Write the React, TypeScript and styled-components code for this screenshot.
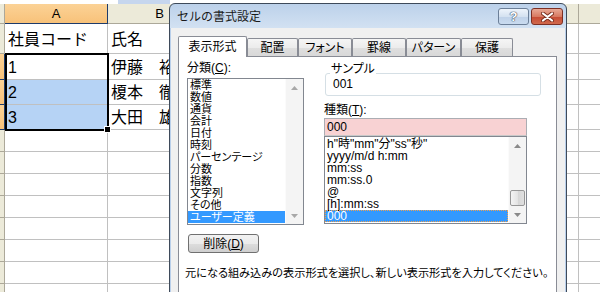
import styled, {createGlobalStyle, css} from 'styled-components';

const columns = ['A', 'B', 'C', 'D', 'E'];

const rows: string[][] = [
  ['社員コード', '氏名'],
  ['1', '伊藤　裕'],
  ['2', '榎本　徹'],
  ['3', '大田　雄'],
  [], [], [], [], [], [], [], [],
];

const categories = [
  '標準', '数値', '通貨', '会計', '日付', '時刻', 'パーセンテージ',
  '分数', '指数', '文字列', 'その他', 'ユーザー定義',
];

const formats = [
  'h"時"mm"分"ss"秒"',
  'yyyy/m/d h:mm',
  'mm:ss',
  'mm:ss.0',
  '@',
  '[h]:mm:ss',
  '000',
];

const tabs = [
  {label: '表示形式', width: 69},
  {label: '配置', width: 51},
  {label: 'フォント', width: 54},
  {label: '罫線', width: 54},
  {label: 'パターン', width: 55},
  {label: '保護', width: 52},
];

function ScrollArrow({down, color}: {down?: boolean; color: string}) {
  return (
    <svg width="7" height="4" viewBox="0 0 7 4">
      <path d={down ? 'M0 0h7L3.5 4z' : 'M0 4h7L3.5 0z'} fill={color}/>
    </svg>
  );
}

function CloseGlyph() {
  return (
    <svg width="13" height="10" viewBox="0 0 13 10">
      <path d="M2 1.5l9 7M11 1.5l-9 7" stroke="#7a3020" strokeWidth="4" strokeLinecap="round"/>
      <path d="M2 1.5l9 7M11 1.5l-9 7" stroke="#fff" strokeWidth="2.2" strokeLinecap="round"/>
    </svg>
  );
}

export default function App() {
  return (
    <Page>
      <GlobalStyle/>
      <TopStrip>
        <StripBlank/>
        <StripBlue/>
      </TopStrip>

      <Sheet>
        <HeaderCell $row={1} $col={1}/>
        {columns.map((c, j) => (
          <HeaderCell key={c} $row={1} $col={j + 2} $active={c === 'A'}>{c}</HeaderCell>
        ))}
        {rows.map((r, i) => [
          <HeaderCell key={`h${i}`} $row={i + 2} $col={1} $active={i >= 1 && i <= 3}/>,
          ...columns.map((c, j) => (
            <Cell key={`${c}${i}`} $row={i + 2} $col={j + 2} $selected={j === 0 && (i === 2 || i === 3)}>
              {r[j] ?? ''}
            </Cell>
          )),
        ])}
        <Selection/>
      </Sheet>

      <Dialog>
        <TitleBar>
          <Title>セルの書式設定</Title>
          <CaptionButtons>
            <HelpButton>?</HelpButton>
            <CloseButton><CloseGlyph/></CloseButton>
          </CaptionButtons>
        </TitleBar>

        <Client>
          <TabStrip>
            {tabs.map((t, i) => (
              <Tab key={t.label} $w={t.width} $active={i === 0}>{t.label}</Tab>
            ))}
          </TabStrip>

          <Panel>
            <Columns>
              <Column>
                <FieldLabel>分類(<u>C</u>):</FieldLabel>
                <ListBox $h={147}>
                  <ListItems>
                    {categories.map((c, i) => (
                      <ListItem key={c} $selected={i === categories.length - 1}>{c}</ListItem>
                    ))}
                  </ListItems>
                  <ScrollBar>
                    <ArrowButton><ScrollArrow color="#a8a8a8"/></ArrowButton>
                    <Track/>
                    <ArrowButton><ScrollArrow down color="#a8a8a8"/></ArrowButton>
                  </ScrollBar>
                </ListBox>
                <PushButton>削除(<u>D</u>)</PushButton>
              </Column>

              <Column>
                <GroupBox>
                  <GroupLegend>サンプル</GroupLegend>
                  <SampleValue>001</SampleValue>
                </GroupBox>
                <FieldLabel $gap={8}>種類(<u>T</u>):</FieldLabel>
                <TextInput>000</TextInput>
                <ListBox $h={88} $joined>
                  <ListItems $pad={1}>
                    {formats.map((f, i) => (
                      <ListItem key={f} $latin $selected={i === formats.length - 1} $focus={i === formats.length - 1}>{f}</ListItem>
                    ))}
                  </ListItems>
                  <ScrollBar>
                    <ArrowButton><ScrollArrow color="#8a8a8a"/></ArrowButton>
                    <Track>
                      <Thumb/>
                    </Track>
                    <ArrowButton><ScrollArrow down color="#8a8a8a"/></ArrowButton>
                  </ScrollBar>
                </ListBox>
              </Column>
            </Columns>

            <Hint>元になる組み込みの表示形式を選択し、新しい表示形式を入力してください。</Hint>
          </Panel>
        </Client>
      </Dialog>
    </Page>
  );
}

const GlobalStyle = createGlobalStyle`
  html, body {
    margin: 0;
    padding: 0;
    background: #fff;
    overflow: hidden;
  }

  body {
    font-family: "Liberation Sans", "Noto Sans CJK JP", sans-serif;
  }
`;

const Page = styled.div`
  position: relative;
  width: 600px;
  height: 292px;
  overflow: hidden;
`;

const TopStrip = styled.div`
  display: flex;
  height: 4px;
`;

const StripBlank = styled.div`
  width: 118px;
  background: #fff;
`;

const StripBlue = styled.div`
  width: 52px;
  background: #c6d6ee;
`;

const Sheet = styled.div`
  display: grid;
  grid-template-columns: 5px 103px 104px 183px 184px 120px;
  grid-template-rows: 20px 30px 26px 25px 25px repeat(8, 22px);
`;

const GridPlaced = css<{$row: number; $col: number}>`
  grid-row: ${({$row}) => $row};
  grid-column: ${({$col}) => $col};
`;

const HeaderCell = styled.div<{$row: number; $col: number; $active?: boolean}>`
  ${GridPlaced};
  box-sizing: border-box;
  display: flex;
  align-items: center;
  justify-content: center;
  overflow: hidden;
  background: #ecead9;
  border-right: 1px solid #aca899;
  border-bottom: 1px solid #aca899;
  font-family: "Liberation Sans", sans-serif;
  font-size: 13px;
  color: #000;

  ${({$active}) => $active && css`
    background: linear-gradient(#fbd296, #f8c27a);
    border-right-color: #1d3b6b;
    border-bottom-color: #1d3b6b;
  `}
`;

const Cell = styled.div<{$row: number; $col: number; $selected?: boolean}>`
  ${GridPlaced};
  box-sizing: border-box;
  display: flex;
  align-items: center;
  padding: 2px 0 0 3px;
  overflow: hidden;
  white-space: nowrap;
  background: ${({$selected}) => $selected ? '#b6d3f5' : '#fff'};
  border-right: 1px solid #c0c0c0;
  border-bottom: 1px solid #c0c0c0;
  font-family: "Liberation Sans", "Noto Sans CJK JP", sans-serif;
  font-size: 16px;
  line-height: 1;
  color: #000;
`;

const Selection = styled.div`
  grid-row: 3 / 6;
  grid-column: 2 / 3;
  position: relative;
  margin: -1px -1px -1px 0;
  border: 2px solid #000;
  pointer-events: none;

  &::after {
    content: '';
    position: absolute;
    right: -4px;
    bottom: -4px;
    width: 5px;
    height: 5px;
    background: #000;
    border: 1px solid #fff;
  }
`;

const Dialog = styled.div`
  position: absolute;
  top: 3px;
  left: 169px;
  width: 398px;
  height: 300px;
  box-sizing: border-box;
  display: flex;
  flex-direction: column;
  border: 1px solid #3e4a5a;
  border-radius: 6px 6px 0 0;
  background: linear-gradient(#bcd1ea, #d2e1f2 24px, #c4d8ef 24px);
  font-family: "Liberation Sans", "Noto Sans CJK JP", sans-serif;
  font-feature-settings: "palt";
  color: #000;
`;

const TitleBar = styled.div`
  display: flex;
  align-items: flex-start;
  height: 24px;
  box-sizing: border-box;
  padding: 4px 3px 0 7px;
`;

const Title = styled.span`
  font-family: "Noto Sans CJK JP", sans-serif;
  font-feature-settings: normal;
  font-size: 12px;
  line-height: 16px;
  color: #1a1a1a;
`;

const CaptionButtons = styled.div`
  display: flex;
  gap: 2px;
  margin-left: auto;
`;

const CaptionButton = styled.div`
  box-sizing: border-box;
  height: 17px;
  display: flex;
  align-items: center;
  justify-content: center;
  border-radius: 3px;
`;

const HelpButton = styled(CaptionButton)`
  width: 31px;
  border: 1px solid #6c7f98;
  background: linear-gradient(#eef4fb, #d5e2f1 50%, #bfd1e8 51%, #cadcf0);
  font-family: "Liberation Sans", sans-serif;
  font-weight: bold;
  font-size: 13px;
  color: #fff;
  text-shadow: 0 0 1px #3b4a5f, 0 0 1px #3b4a5f, 0 0 1px #3b4a5f;
`;

const CloseButton = styled(CaptionButton)`
  width: 32px;
  border: 1px solid #7d2f23;
  background: linear-gradient(#e8a996, #d87a62 50%, #c64a33 51%, #d0694d);
`;

const Client = styled.div`
  flex: 1;
  display: flex;
  flex-direction: column;
  padding: 8px 8px 0 7px;
  background: #f0f0f0;
  border-left: 1px solid #b9cfea;
  border-right: 1px solid #b9cfea;
`;

const TabStrip = styled.div`
  display: flex;
  align-items: flex-end;
  height: 20px;
  position: relative;
  z-index: 1;
`;

const Tab = styled.div<{$w: number; $active?: boolean}>`
  box-sizing: border-box;
  width: ${({$w}) => $w}px;
  height: 18px;
  display: flex;
  justify-content: center;
  padding-top: 2px;
  border: 1px solid #898c95;
  border-bottom: none;
  border-radius: 2px 2px 0 0;
  background: linear-gradient(#f5f5f5, #ececec 50%, #dfdfdf 51%, #d8d8d8);
  font-size: 12px;
  line-height: 14px;

  ${({$active}) => $active && css`
    height: 21px;
    margin-bottom: -1px;
    padding-top: 3px;
    background: #fff;
  `}
`;

const Panel = styled.div`
  flex: 1;
  display: flex;
  flex-direction: column;
  padding: 5px 0 0 8px;
  background: #fff;
  border: 1px solid #898c95;
`;

const Columns = styled.div`
  display: grid;
  grid-template-columns: 117px 217px;
  column-gap: 20px;
  align-items: start;
`;

const Column = styled.div`
  display: flex;
  flex-direction: column;
  align-items: flex-start;
`;

const FieldLabel = styled.div<{$gap?: number}>`
  margin-top: ${({$gap}) => $gap ?? 0}px;
  font-size: 12px;
  line-height: 12px;
  height: 12px;
  white-space: nowrap;

  u {
    text-underline-offset: 1px;
  }
`;

const ListBox = styled.div<{$h: number; $joined?: boolean}>`
  box-sizing: border-box;
  width: ${({$joined}) => $joined ? 203 : 117}px;
  height: ${({$h}) => $h}px;
  margin-top: ${({$joined}) => $joined ? 0 : 4}px;
  display: flex;
  border: 1px solid #828790;
  background: #fff;
  overflow: hidden;
`;

const ListItems = styled.div<{$pad?: number}>`
  flex: 1;
  min-width: 0;
  padding-top: ${({$pad}) => $pad ?? 0}px;
  overflow: hidden;
`;

const ListItem = styled.div<{$selected?: boolean; $focus?: boolean; $latin?: boolean}>`
  box-sizing: border-box;
  height: 12px;
  padding-left: 2px;
  font-size: ${({$latin}) => $latin ? 12 : 11}px;
  line-height: 12px;
  white-space: nowrap;

  ${({$selected}) => $selected && css`
    background: #3399ff;
    color: #fff;
  `}

  ${({$focus}) => $focus && css`
    outline: 1px dotted #f0a050;
    outline-offset: -1px;
  `}
`;

const ScrollBar = styled.div`
  width: 17px;
  display: flex;
  flex-direction: column;
  background: #f4f4f4;
  border-left: 1px solid #fbfbfb;
`;

const ArrowButton = styled.div`
  height: 17px;
  display: flex;
  align-items: center;
  justify-content: center;
`;

const Track = styled.div`
  flex: 1;
  display: flex;
  flex-direction: column;
  justify-content: flex-end;
  padding: 0 1px;
`;

const Thumb = styled.div`
  height: 16px;
  box-sizing: border-box;
  border: 1px solid #979797;
  border-radius: 2px;
  background: linear-gradient(90deg, #f4f4f4, #e4e4e4 50%, #d6d6d6 51%, #e0e0e0);
`;

const PushButton = styled.div`
  box-sizing: border-box;
  width: 71px;
  height: 19px;
  margin: 9px 0 0 1px;
  display: flex;
  align-items: center;
  justify-content: center;
  border: 1px solid #707070;
  border-radius: 3px;
  background: linear-gradient(#f2f2f2, #ebebeb 50%, #dddddd 51%, #cfcfcf);
  font-size: 12px;
  line-height: 14px;
`;

const GroupBox = styled.fieldset`
  box-sizing: border-box;
  width: 216px;
  margin: 1px 0 0 1px;
  padding: 0 4px 5px 7px;
  border: 1px solid #d5dfe5;
  border-radius: 3px;
  min-width: 0;
`;

const GroupLegend = styled.legend`
  padding: 0 1px 8px;
  margin-left: -3px;
  font-size: 12px;
  line-height: 12px;
`;

const SampleValue = styled.div`
  margin-top: -5px;
  font-size: 12px;
  line-height: 12px;
`;

const TextInput = styled.div`
  box-sizing: border-box;
  width: 203px;
  height: 18px;
  margin-top: 2px;
  padding-left: 2px;
  border: 1px solid #abadb3;
  border-bottom-color: #c8c8c8;
  background: #f8d2d3;
  font-size: 12px;
  line-height: 16px;
`;

const Hint = styled.div`
  margin: 13px 0 0 -2px;
  font-size: 11.2px;
  line-height: 14px;
  white-space: nowrap;
`;
